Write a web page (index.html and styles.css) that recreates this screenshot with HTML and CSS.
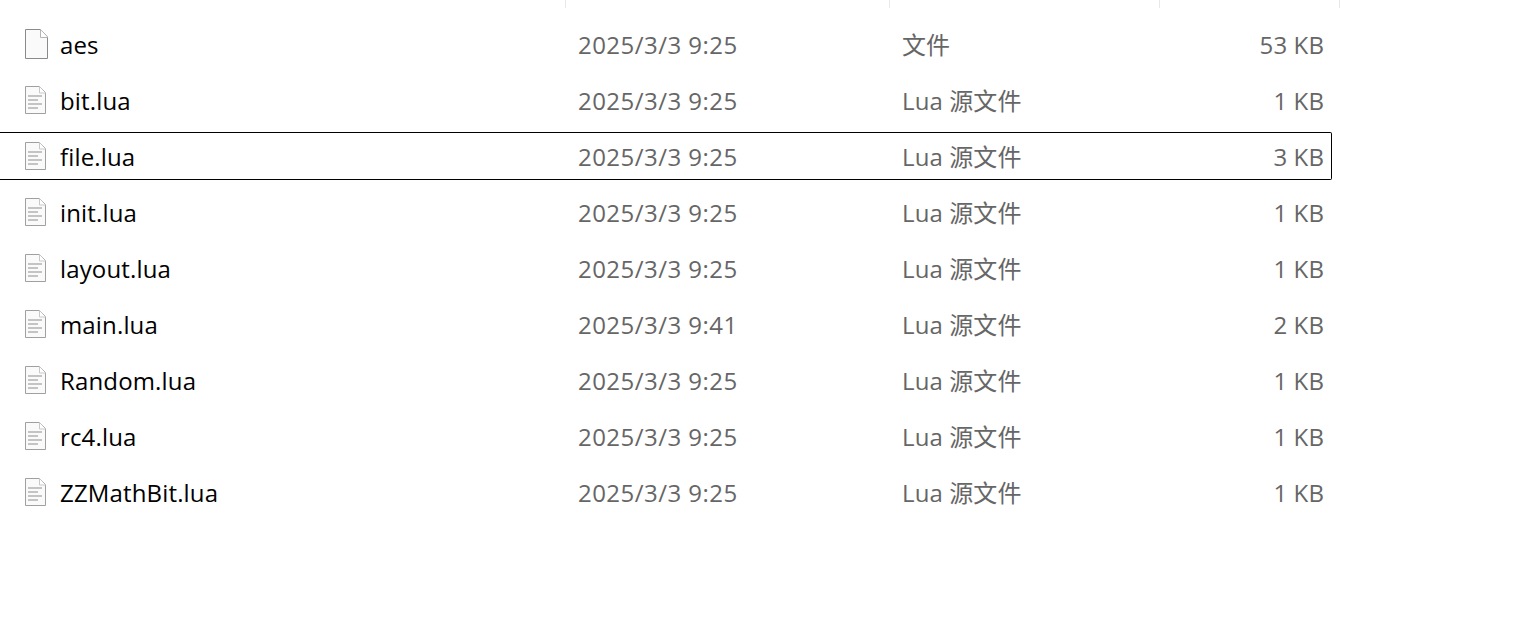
FILE: index.html
```html
<!DOCTYPE html>
<html lang="zh-CN">
<head>
    <meta charset="UTF-8">
    <meta name="viewport" content="width=device-width, initial-scale=1.0">
    <title>Files</title>
    <link rel="stylesheet" href="styles.css">
</head>
<body>
    <svg class="defs" width="0" height="0">
        <symbol id="icon-blank" viewBox="0 0 23 30">
            <path d="M.5.5h15l7 7.500v21.500H.5z" fill="#fafafa" stroke="#8a8a8a"/>
            <path d="M15.500.5v8h7" fill="#fff" stroke="#b5b5b5"/>
        </symbol>
        <symbol id="icon-lua" viewBox="0 0 21 28">
            <path d="M.5.5h14l6 6v21H.5z" fill="#fafafa" stroke="#a0a0a0"/>
            <path d="M14.500.5v6.500h6" fill="#fff" stroke="#c8c8c8"/>
            <path d="M3 10h14M3 14h10M3 18h14M3 22h10" fill="none" stroke="#c4c4c4" stroke-width="2"/>
        </symbol>
    </svg>
    <div class="header">
        <div class="col-name"></div>
        <div class="col-date"></div>
        <div class="col-type"></div>
        <div class="col-size"></div>
    </div>
    <div class="list">
        <div class="row">
            <div class="col-name"><svg class="icon-blank"><use href="#icon-blank"/></svg><span>aes</span></div>
            <div class="col-date">2025/3/3 9:25</div>
            <div class="col-type">文件</div>
            <div class="col-size">53 KB</div>
        </div>
        <div class="row">
            <div class="col-name"><svg class="icon-lua"><use href="#icon-lua"/></svg><span>bit.lua</span></div>
            <div class="col-date">2025/3/3 9:25</div>
            <div class="col-type">Lua 源文件</div>
            <div class="col-size">1 KB</div>
        </div>
        <div class="row focused">
            <div class="col-name"><svg class="icon-lua"><use href="#icon-lua"/></svg><span>file.lua</span></div>
            <div class="col-date">2025/3/3 9:25</div>
            <div class="col-type">Lua 源文件</div>
            <div class="col-size">3 KB</div>
        </div>
        <div class="row">
            <div class="col-name"><svg class="icon-lua"><use href="#icon-lua"/></svg><span>init.lua</span></div>
            <div class="col-date">2025/3/3 9:25</div>
            <div class="col-type">Lua 源文件</div>
            <div class="col-size">1 KB</div>
        </div>
        <div class="row">
            <div class="col-name"><svg class="icon-lua"><use href="#icon-lua"/></svg><span>layout.lua</span></div>
            <div class="col-date">2025/3/3 9:25</div>
            <div class="col-type">Lua 源文件</div>
            <div class="col-size">1 KB</div>
        </div>
        <div class="row">
            <div class="col-name"><svg class="icon-lua"><use href="#icon-lua"/></svg><span>main.lua</span></div>
            <div class="col-date">2025/3/3 9:41</div>
            <div class="col-type">Lua 源文件</div>
            <div class="col-size">2 KB</div>
        </div>
        <div class="row">
            <div class="col-name"><svg class="icon-lua"><use href="#icon-lua"/></svg><span>Random.lua</span></div>
            <div class="col-date">2025/3/3 9:25</div>
            <div class="col-type">Lua 源文件</div>
            <div class="col-size">1 KB</div>
        </div>
        <div class="row">
            <div class="col-name"><svg class="icon-lua"><use href="#icon-lua"/></svg><span>rc4.lua</span></div>
            <div class="col-date">2025/3/3 9:25</div>
            <div class="col-type">Lua 源文件</div>
            <div class="col-size">1 KB</div>
        </div>
        <div class="row">
            <div class="col-name"><svg class="icon-lua"><use href="#icon-lua"/></svg><span>ZZMathBit.lua</span></div>
            <div class="col-date">2025/3/3 9:25</div>
            <div class="col-type">Lua 源文件</div>
            <div class="col-size">1 KB</div>
        </div>
    </div>
</body>
</html>
```

FILE: styles.css
```css
html, body{
    height: 100%;
}
body{
    margin: 0;
    background-color: #fff;
    font-family: "Open Sans", "Noto Sans CJK SC", sans-serif;
    font-size: 24px;
    color: #666;
    overflow: hidden;
}
.defs{
    display: block;
    height: 0;
}
.header{
    display: flex;
    width: 1340px;
    height: 8px;
}
.header > div{
    border-right: 1px solid #e8e8e8;
    box-sizing: border-box;
}
.header .col-name{
    width: 566px;
}
.header .col-date{
    width: 324px;
}
.header .col-type{
    width: 270px;
}
.header .col-size{
    width: 180px;
}
.list{
    display: flex;
    flex-direction: column;
    gap: 8px;
    padding-top: 13px;
    width: 1332px;
}
.row{
    display: flex;
    align-items: center;
    height: 48px;
    padding-bottom: 2px;
    box-sizing: border-box;
}
.focused{
    border: 1px solid #000;
    border-left: none;
    border-radius: 0 2px 2px 0;
    margin-top: -1px;
    margin-bottom: 1px;
    padding-bottom: 0;
}
.row .col-name{
    display: flex;
    align-items: center;
    width: 566px;
    color: #000;
    letter-spacing: 0.15px;
}
.icon-blank{
    width: 23px;
    height: 30px;
    margin-left: 25px;
    margin-right: 12px;
}
.icon-lua{
    width: 21px;
    height: 28px;
    margin-left: 25px;
    margin-right: 14px;
}
.row .col-date{
    width: 324px;
    padding-left: 12px;
    box-sizing: border-box;
    letter-spacing: 0.46px;
}
.row .col-type{
    width: 270px;
    padding-left: 12px;
    margin-top: -2px;
    box-sizing: border-box;
    letter-spacing: 0.1px;
}
.row .col-size{
    width: 172px;
    padding-right: 8px;
    box-sizing: border-box;
    text-align: right;
    letter-spacing: 0.1px;
}
.focused .col-size{
    width: 171px;
    padding-right: 7px;
}
```
